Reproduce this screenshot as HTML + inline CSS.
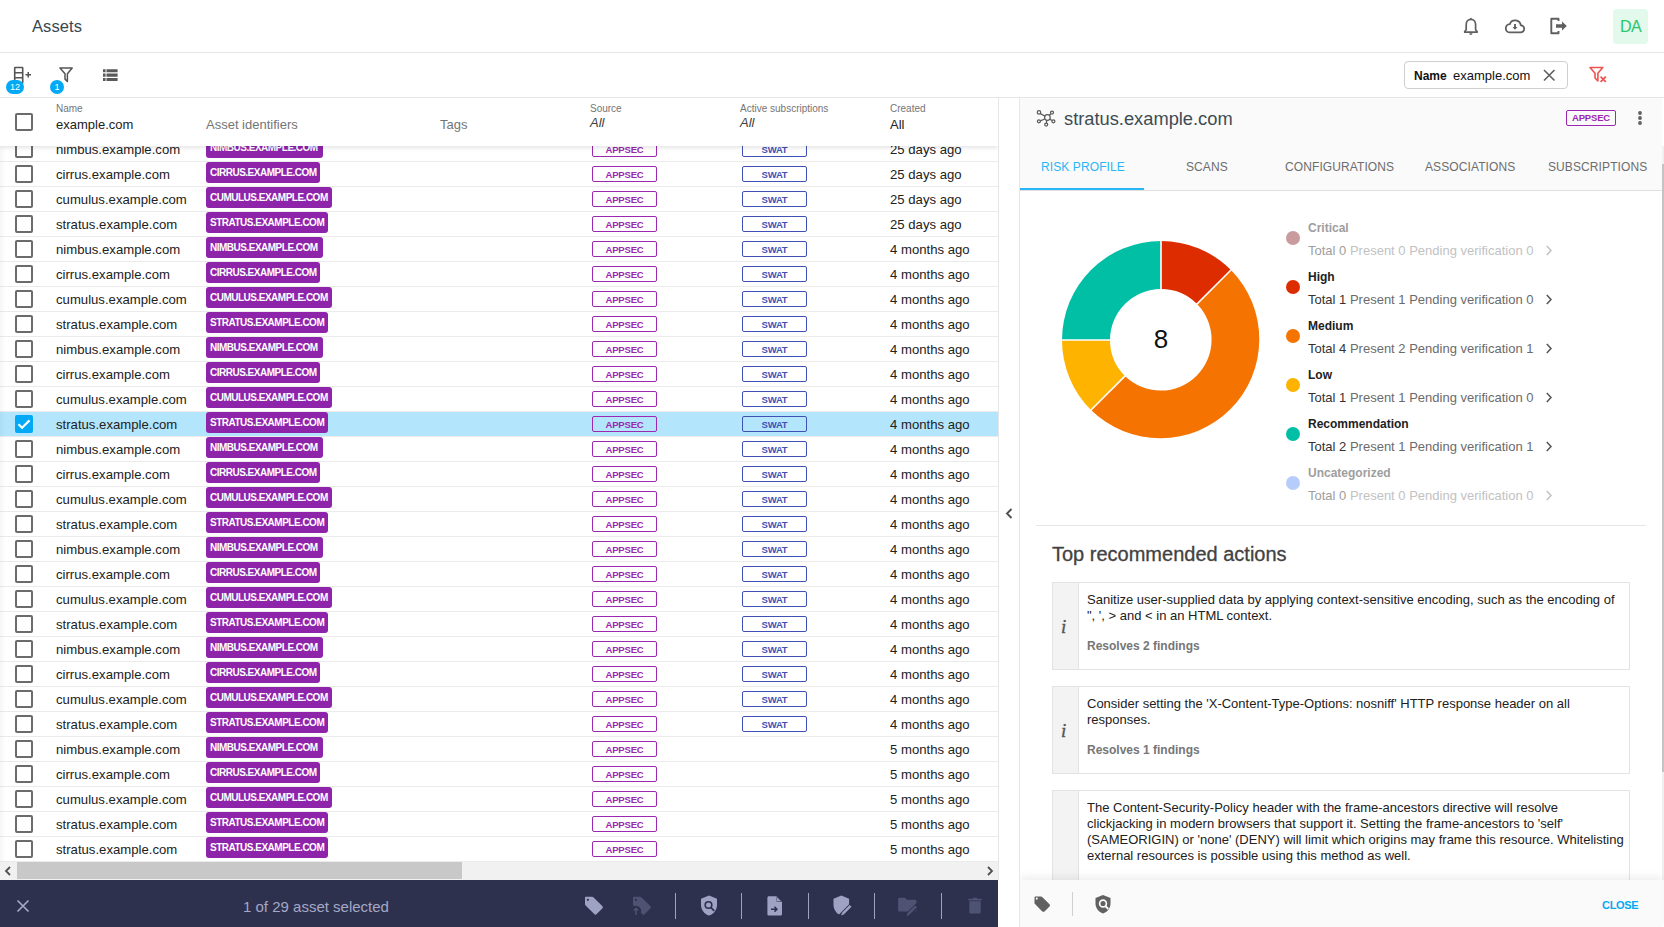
<!DOCTYPE html>
<html><head><meta charset="utf-8">
<style>
*{box-sizing:border-box;margin:0;padding:0}
html,body{width:1664px;height:927px;overflow:hidden;background:#fff;font-family:"Liberation Sans",sans-serif;color:#212121}
.abs{position:absolute}
#top{position:absolute;left:0;top:0;width:1664px;height:53px;border-bottom:1px solid #e6e6e6;background:#fff}
#top .title{position:absolute;left:32px;top:17px;font-size:16.5px;color:#37474f;letter-spacing:0.1px}
#tb{position:absolute;left:0;top:53px;width:1664px;height:45px;border-bottom:1px solid #e6e6e6;background:#fff}
.badge{position:absolute;background:#03a9f4;color:#fff;font-size:9px;text-align:center;line-height:15px;height:14px;border-radius:7px}
/* table */
#tbl{position:absolute;left:0;top:98px;width:999px;height:782px;overflow:hidden;border-right:1px solid #e6e6e6}
#thead{position:absolute;left:0;top:0;width:998px;height:48px;background:#fff;z-index:5;box-shadow:0 2px 4px rgba(0,0,0,0.10)}
.hl{position:absolute;font-size:10px;color:#757575;top:5px}
.hv{position:absolute;font-size:13px;top:19px;color:#212121}
.row{position:absolute;left:0;width:998px;height:25px;border-bottom:1px solid #ebebeb;background:#fff}
.row.sel{background:#b3e5fc}
.cb{position:absolute;left:15px;top:3px;width:18px;height:18px;border:2px solid #6b6b6b;border-radius:2px}
.cb.on{background:#03a9f4;border-color:#03a9f4}
.cb.on svg{position:absolute;left:-2px;top:-2px}
.nm{position:absolute;left:56px;top:5px;font-size:13.15px;color:#212121}
.chip{position:absolute;left:206px;top:0px;height:21px;background:#8e24aa;color:#fff;border-radius:3px;font-size:10px;font-weight:bold;letter-spacing:-0.5px;line-height:22px;padding-left:4px;white-space:nowrap;overflow:hidden}
.src{position:absolute;left:592px;top:4px;width:65px;height:16px;border:1.5px solid #9c27b0;border-radius:2px;color:#9c27b0;font-size:9.5px;font-weight:bold;letter-spacing:-0.2px;text-align:center;line-height:15px}
.swat{position:absolute;left:742px;top:4px;width:65px;height:16px;border:1.5px solid #3f51b5;border-radius:2px;color:#3f51b5;font-size:9.5px;font-weight:bold;letter-spacing:-0.2px;text-align:center;line-height:15px}
.cr{position:absolute;left:890px;top:5px;font-size:13.15px;color:#212121}
#hscroll{position:absolute;left:0;top:764px;width:998px;height:18px;background:#f1f1f1}
#bar{position:absolute;left:0;top:880px;width:998px;height:47px;background:#2e314d}
/* divider */
#div{position:absolute;left:999px;top:98px;width:21px;height:829px;background:#fff;border-right:1px solid #e6e6e6}
/* panel */
#panel{position:absolute;left:1020px;top:98px;width:644px;height:829px;background:#fff;overflow:hidden}
#phead{position:absolute;left:0;top:0;width:642px;height:93px;background:#fafafa;border-bottom:1px solid #e0e0e0}
.tab{position:absolute;top:62px;font-size:12px;color:#6d6d6d;letter-spacing:0.1px}
.leg{position:absolute;left:288px}
.dot{position:absolute;left:-15px;width:14px;height:14px;border-radius:7px}
.lt{position:absolute;left:0;font-size:12px;font-weight:bold;color:#212121;white-space:nowrap}
.ld{position:absolute;left:0;font-size:13px;color:#6b6b6b;white-space:nowrap}
.ld b{font-weight:normal;color:#333}
.card{position:absolute;left:32px;width:578px;border:1px solid #e3e3e3;background:#fff}
.card .ic{position:absolute;left:0;top:0;bottom:0;width:26px;background:#f3f3f3;border-right:1px solid #e3e3e3}
.card .ic span{position:absolute;left:8px;top:50%;margin-top:-10px;font-family:"Liberation Serif",serif;font-style:italic;font-size:19px;color:#555;-webkit-text-stroke:0.4px #555}
.card .tx{position:absolute;left:34px;top:8.5px;width:540px;font-size:13px;line-height:16px;color:#212121}
.card .rs{position:absolute;left:34px;font-size:12px;font-weight:bold;color:#767676}
#pfoot{position:absolute;left:0;top:782px;width:642px;height:47px;background:#fafafa;box-shadow:0 -3px 8px rgba(0,0,0,0.07)}
#vscroll{position:absolute;left:642px;top:48px;width:2px;height:734px;background:#f0f0f0}
</style></head><body>
<div id="top">
  <div class="title">Assets</div>
  <!-- bell -->
  <svg class="abs" style="left:1461px;top:15px" width="20" height="22" viewBox="0 0 20 22"><path d="M9.9 4.4c-2.9 0-4.7 2.3-4.7 5.2v5.1l-1.5 1.8v.7h12.4v-.7l-1.5-1.8V9.6c0-2.9-1.8-5.2-4.7-5.2z" fill="none" stroke="#5f5f5f" stroke-width="1.7" stroke-linejoin="round"/><rect x="9.1" y="2.8" width="1.6" height="2.2" rx=".8" fill="#5f5f5f"/><path d="M8.3 18.3h3.2a1.6 1.6 0 0 1-3.2 0z" fill="#5f5f5f"/></svg>
  <!-- cloud download -->
  <svg class="abs" style="left:1503px;top:17px" width="24" height="18" viewBox="0 0 24 18"><g transform="translate(1.2 0.6) scale(0.9)"><path d="M6.5 16.5h11.5a4 4 0 0 0 .4-8 6.3 6.3 0 0 0-12.2-1.2A4.6 4.6 0 0 0 6.5 16.5z" fill="none" stroke="#5f5f5f" stroke-width="2" stroke-linejoin="round"/><path d="M12 7.2v4.2" stroke="#5f5f5f" stroke-width="2.1"/><path d="M9.2 10.4h5.6L12 13.5z" fill="#5f5f5f"/></g></svg>
  <!-- logout -->
  <svg class="abs" style="left:1549px;top:16px" width="20" height="20" viewBox="0 0 20 20"><path d="M9.5 5V2.8H2.3v14.4h7.2V15" fill="none" stroke="#5f5f5f" stroke-width="1.9" stroke-linejoin="round"/><path d="M7 8.3h6V5.5l4.8 4.5-4.8 4.5v-2.8H7z" fill="#5f5f5f"/></svg>
  <div class="abs" style="left:1613px;top:9px;width:35px;height:35px;background:#e2f9ec;border-radius:4px;color:#29c66a;font-size:16px;text-align:center;line-height:35px;letter-spacing:-0.5px">DA</div>
</div>
<div id="tb">
  <!-- column add -->
  <svg class="abs" style="left:12px;top:13px" width="22" height="18" viewBox="0 0 22 18"><rect x="2.7" y="1.5" width="8" height="15.5" fill="none" stroke="#555" stroke-width="1.6" rx="0.6"/><path d="M2.7 6.7h8M2.7 11.8h8" stroke="#555" stroke-width="1.6"/><path d="M13.5 8.8h5.5M16.25 6v5.5" stroke="#555" stroke-width="1.5"/></svg>
  <div class="badge" style="left:6px;top:27px;width:18px">12</div>
  <!-- filter -->
  <svg class="abs" style="left:58px;top:13px" width="16" height="17" viewBox="0 0 16 17"><path d="M2 1.9h12.2L9.4 7.7v7.8l-2.4-2.4V7.7z" fill="none" stroke="#555" stroke-width="1.5" stroke-linejoin="round"/></svg>
  <div class="badge" style="left:50px;top:27px;width:14px">1</div>
  <!-- list -->
  <svg class="abs" style="left:103px;top:16px" width="15" height="13" viewBox="0 0 15 13"><path d="M0 .2h2.6v3.1H0zM3.5 .2H14.6v3.1H3.5zM0 4.6h2.6v3.1H0zM3.5 4.6H14.6v3.1H3.5zM0 9h2.6v3.1H0zM3.5 9H14.6v3.1H3.5z" fill="#595959"/></svg>
  <!-- filter chip -->
  <div class="abs" style="left:1404px;top:8px;width:164px;height:28px;border:1px solid #cfcfcf;border-radius:4px;background:#fff">
    <span class="abs" style="left:9px;top:7px;font-size:12px;font-weight:bold;color:#111">Name</span>
    <span class="abs" style="left:48px;top:6px;font-size:13px;color:#111">example.com</span>
    <svg class="abs" style="left:137px;top:6px" width="14" height="14" viewBox="0 0 14 14"><path d="M2 2l10.5 10.5M12.5 2L2 12.5" stroke="#5f5f5f" stroke-width="1.6"/></svg>
  </div>
  <svg class="abs" style="left:1588px;top:13px" width="20" height="17" viewBox="0 0 20 17"><path d="M2 1.5h12.8L9.9 7.3v7.6L7 12V7.3z" fill="none" stroke="#ef5350" stroke-width="1.6" stroke-linejoin="round"/><path d="M12.6 10.6l5.2 5.2M17.8 10.6l-5.2 5.2" stroke="#ef5350" stroke-width="1.7"/></svg>
</div>

<div id="tbl">
<div class="row" style="top:39px"><div class="cb"></div><div class="nm">nimbus.example.com</div><div class="chip" style="width:117px">NIMBUS.EXAMPLE.COM</div><div class="src">APPSEC</div><div class="swat">SWAT</div><div class="cr">25 days ago</div></div>
<div class="row" style="top:64px"><div class="cb"></div><div class="nm">cirrus.example.com</div><div class="chip" style="width:114px">CIRRUS.EXAMPLE.COM</div><div class="src">APPSEC</div><div class="swat">SWAT</div><div class="cr">25 days ago</div></div>
<div class="row" style="top:89px"><div class="cb"></div><div class="nm">cumulus.example.com</div><div class="chip" style="width:126px">CUMULUS.EXAMPLE.COM</div><div class="src">APPSEC</div><div class="swat">SWAT</div><div class="cr">25 days ago</div></div>
<div class="row" style="top:114px"><div class="cb"></div><div class="nm">stratus.example.com</div><div class="chip" style="width:122px">STRATUS.EXAMPLE.COM</div><div class="src">APPSEC</div><div class="swat">SWAT</div><div class="cr">25 days ago</div></div>
<div class="row" style="top:139px"><div class="cb"></div><div class="nm">nimbus.example.com</div><div class="chip" style="width:117px">NIMBUS.EXAMPLE.COM</div><div class="src">APPSEC</div><div class="swat">SWAT</div><div class="cr">4 months ago</div></div>
<div class="row" style="top:164px"><div class="cb"></div><div class="nm">cirrus.example.com</div><div class="chip" style="width:114px">CIRRUS.EXAMPLE.COM</div><div class="src">APPSEC</div><div class="swat">SWAT</div><div class="cr">4 months ago</div></div>
<div class="row" style="top:189px"><div class="cb"></div><div class="nm">cumulus.example.com</div><div class="chip" style="width:126px">CUMULUS.EXAMPLE.COM</div><div class="src">APPSEC</div><div class="swat">SWAT</div><div class="cr">4 months ago</div></div>
<div class="row" style="top:214px"><div class="cb"></div><div class="nm">stratus.example.com</div><div class="chip" style="width:122px">STRATUS.EXAMPLE.COM</div><div class="src">APPSEC</div><div class="swat">SWAT</div><div class="cr">4 months ago</div></div>
<div class="row" style="top:239px"><div class="cb"></div><div class="nm">nimbus.example.com</div><div class="chip" style="width:117px">NIMBUS.EXAMPLE.COM</div><div class="src">APPSEC</div><div class="swat">SWAT</div><div class="cr">4 months ago</div></div>
<div class="row" style="top:264px"><div class="cb"></div><div class="nm">cirrus.example.com</div><div class="chip" style="width:114px">CIRRUS.EXAMPLE.COM</div><div class="src">APPSEC</div><div class="swat">SWAT</div><div class="cr">4 months ago</div></div>
<div class="row" style="top:289px"><div class="cb"></div><div class="nm">cumulus.example.com</div><div class="chip" style="width:126px">CUMULUS.EXAMPLE.COM</div><div class="src">APPSEC</div><div class="swat">SWAT</div><div class="cr">4 months ago</div></div>
<div class="row sel" style="top:314px"><div class="cb on"><svg width="18" height="18" viewBox="0 0 18 18"><path d="M3.5 9.2l3.6 3.6 7.4-7.4" fill="none" stroke="#fff" stroke-width="2.2"/></svg></div><div class="nm">stratus.example.com</div><div class="chip" style="width:122px">STRATUS.EXAMPLE.COM</div><div class="src">APPSEC</div><div class="swat">SWAT</div><div class="cr">4 months ago</div></div>
<div class="row" style="top:339px"><div class="cb"></div><div class="nm">nimbus.example.com</div><div class="chip" style="width:117px">NIMBUS.EXAMPLE.COM</div><div class="src">APPSEC</div><div class="swat">SWAT</div><div class="cr">4 months ago</div></div>
<div class="row" style="top:364px"><div class="cb"></div><div class="nm">cirrus.example.com</div><div class="chip" style="width:114px">CIRRUS.EXAMPLE.COM</div><div class="src">APPSEC</div><div class="swat">SWAT</div><div class="cr">4 months ago</div></div>
<div class="row" style="top:389px"><div class="cb"></div><div class="nm">cumulus.example.com</div><div class="chip" style="width:126px">CUMULUS.EXAMPLE.COM</div><div class="src">APPSEC</div><div class="swat">SWAT</div><div class="cr">4 months ago</div></div>
<div class="row" style="top:414px"><div class="cb"></div><div class="nm">stratus.example.com</div><div class="chip" style="width:122px">STRATUS.EXAMPLE.COM</div><div class="src">APPSEC</div><div class="swat">SWAT</div><div class="cr">4 months ago</div></div>
<div class="row" style="top:439px"><div class="cb"></div><div class="nm">nimbus.example.com</div><div class="chip" style="width:117px">NIMBUS.EXAMPLE.COM</div><div class="src">APPSEC</div><div class="swat">SWAT</div><div class="cr">4 months ago</div></div>
<div class="row" style="top:464px"><div class="cb"></div><div class="nm">cirrus.example.com</div><div class="chip" style="width:114px">CIRRUS.EXAMPLE.COM</div><div class="src">APPSEC</div><div class="swat">SWAT</div><div class="cr">4 months ago</div></div>
<div class="row" style="top:489px"><div class="cb"></div><div class="nm">cumulus.example.com</div><div class="chip" style="width:126px">CUMULUS.EXAMPLE.COM</div><div class="src">APPSEC</div><div class="swat">SWAT</div><div class="cr">4 months ago</div></div>
<div class="row" style="top:514px"><div class="cb"></div><div class="nm">stratus.example.com</div><div class="chip" style="width:122px">STRATUS.EXAMPLE.COM</div><div class="src">APPSEC</div><div class="swat">SWAT</div><div class="cr">4 months ago</div></div>
<div class="row" style="top:539px"><div class="cb"></div><div class="nm">nimbus.example.com</div><div class="chip" style="width:117px">NIMBUS.EXAMPLE.COM</div><div class="src">APPSEC</div><div class="swat">SWAT</div><div class="cr">4 months ago</div></div>
<div class="row" style="top:564px"><div class="cb"></div><div class="nm">cirrus.example.com</div><div class="chip" style="width:114px">CIRRUS.EXAMPLE.COM</div><div class="src">APPSEC</div><div class="swat">SWAT</div><div class="cr">4 months ago</div></div>
<div class="row" style="top:589px"><div class="cb"></div><div class="nm">cumulus.example.com</div><div class="chip" style="width:126px">CUMULUS.EXAMPLE.COM</div><div class="src">APPSEC</div><div class="swat">SWAT</div><div class="cr">4 months ago</div></div>
<div class="row" style="top:614px"><div class="cb"></div><div class="nm">stratus.example.com</div><div class="chip" style="width:122px">STRATUS.EXAMPLE.COM</div><div class="src">APPSEC</div><div class="swat">SWAT</div><div class="cr">4 months ago</div></div>
<div class="row" style="top:639px"><div class="cb"></div><div class="nm">nimbus.example.com</div><div class="chip" style="width:117px">NIMBUS.EXAMPLE.COM</div><div class="src">APPSEC</div><div class="cr">5 months ago</div></div>
<div class="row" style="top:664px"><div class="cb"></div><div class="nm">cirrus.example.com</div><div class="chip" style="width:114px">CIRRUS.EXAMPLE.COM</div><div class="src">APPSEC</div><div class="cr">5 months ago</div></div>
<div class="row" style="top:689px"><div class="cb"></div><div class="nm">cumulus.example.com</div><div class="chip" style="width:126px">CUMULUS.EXAMPLE.COM</div><div class="src">APPSEC</div><div class="cr">5 months ago</div></div>
<div class="row" style="top:714px"><div class="cb"></div><div class="nm">stratus.example.com</div><div class="chip" style="width:122px">STRATUS.EXAMPLE.COM</div><div class="src">APPSEC</div><div class="cr">5 months ago</div></div>
<div class="row" style="top:739px"><div class="cb"></div><div class="nm">stratus.example.com</div><div class="chip" style="width:122px">STRATUS.EXAMPLE.COM</div><div class="src">APPSEC</div><div class="cr">5 months ago</div></div>
  <div class="abs" style="left:0;top:48px;width:6px;height:716px;background:linear-gradient(to right,rgba(0,0,0,0.035),rgba(0,0,0,0));z-index:4"></div>
  <div id="thead">
    <div class="cb" style="top:15px"></div>
    <div class="hl" style="left:56px">Name</div>
    <div class="hv" style="left:56px">example.com</div>
    <div class="hv" style="left:206px;color:#757575">Asset identifiers</div>
    <div class="hv" style="left:440px;color:#757575">Tags</div>
    <div class="hl" style="left:590px">Source</div>
    <div class="hv" style="left:590px;top:17px;font-style:italic;color:#424242">All</div>
    <div class="hl" style="left:740px">Active subscriptions</div>
    <div class="hv" style="left:740px;top:17px;font-style:italic;color:#424242">All</div>
    <div class="hl" style="left:890px">Created</div>
    <div class="hv" style="left:890px">All</div>
  </div>
  <div id="hscroll">
    <div class="abs" style="left:17px;top:0px;width:445px;height:17px;background:#c8c8c8"></div>
    <svg class="abs" style="left:4px;top:4px" width="8" height="10" viewBox="0 0 8 10"><path d="M6 1L2 5l4 4" fill="none" stroke="#505050" stroke-width="1.8"/></svg>
    <svg class="abs" style="left:986px;top:4px" width="8" height="10" viewBox="0 0 8 10"><path d="M2 1l4 4-4 4" fill="none" stroke="#505050" stroke-width="1.8"/></svg>
  </div>
</div>
<div id="bar">
  <svg class="abs" style="left:16px;top:19px" width="14" height="14" viewBox="0 0 14 14"><path d="M1.5 1.5l11 11M12.5 1.5l-11 11" stroke="#a4a8c6" stroke-width="1.7"/></svg>
  <div class="abs" style="left:243px;top:18px;font-size:15px;color:#a4a8c6">1 of 29 asset selected</div>
  <!-- tag -->
  <svg class="abs" style="left:584px;top:16px" width="20" height="20" viewBox="0 0 20 20"><path d="M1 1.8v6.3c0 .5.2 1 .6 1.4l8.6 8.6c.7.7 1.8.7 2.5 0l5.6-5.6c.7-.7.7-1.8 0-2.5L9.6 1.4C9.2 1 8.7.8 8.1.8H2c-.6 0-1 .4-1 1z" fill="#9ea2c3"/><circle cx="3.9" cy="3.8" r="1.1" fill="#2e314d"/></svg>
  <!-- tag upload disabled -->
  <svg class="abs" style="left:632px;top:16px" width="20" height="20" viewBox="0 0 20 20"><path d="M1 1.8v6.3c0 .5.2 1 .6 1.4l8.6 8.6c.7.7 1.8.7 2.5 0l5.6-5.6c.7-.7.7-1.8 0-2.5L9.6 1.4C9.2 1 8.7.8 8.1.8H2c-.6 0-1 .4-1 1z" fill="#4f5373"/><circle cx="3.9" cy="3.8" r="1.1" fill="#2e314d"/><circle cx="4" cy="15" r="5.2" fill="#2e314d"/><path d="M4 19v-6.5M1.8 14.6L4 12.4l2.2 2.2" fill="none" stroke="#4f5373" stroke-width="1.4"/></svg>
  <div class="abs" style="left:675px;top:13px;width:1px;height:26px;background:#9ea2c3"></div>
  <!-- shield search -->
  <svg class="abs" style="left:700px;top:15px" width="18" height="21" viewBox="0 0 18 21"><path d="M9 .5L1 3.7v6c0 5 3.4 9.6 8 10.8 4.6-1.2 8-5.8 8-10.8v-6z" fill="#9ea2c3"/><circle cx="8.5" cy="10" r="3.3" fill="none" stroke="#2e314d" stroke-width="1.6"/><path d="M10.8 12.4l3.4 3.4" stroke="#2e314d" stroke-width="1.8"/></svg>
  <div class="abs" style="left:741px;top:13px;width:1px;height:26px;background:#9ea2c3"></div>
  <!-- file arrow -->
  <svg class="abs" style="left:767px;top:16px" width="16" height="20" viewBox="0 0 16 20"><path d="M2 .3h7.6L15 5.7V18c0 .9-.7 1.6-1.6 1.6H2c-.9 0-1.6-.7-1.6-1.6V1.9C.4 1 1.1.3 2 .3z" fill="#9ea2c3"/><path d="M9.6.3v5.4H15" fill="#2e314d"/><path d="M10 1.3L14 5.3H10z" fill="#9ea2c3"/><path d="M4 13.2h5.5M7.5 10.8l2.4 2.4-2.4 2.4" fill="none" stroke="#2e314d" stroke-width="1.5"/></svg>
  <div class="abs" style="left:808px;top:13px;width:1px;height:26px;background:#9ea2c3"></div>
  <!-- shield edit -->
  <svg class="abs" style="left:833px;top:15px" width="19" height="21" viewBox="0 0 19 21"><path d="M8.3 .5L.5 3.7v6c0 5 3.4 9.6 7.8 10.8 4.4-1.2 7.8-5.8 7.8-10.8v-6z" fill="#9ea2c3"/><path d="M6.5 22.5L20 9" stroke="#2e314d" stroke-width="5.2"/><path d="M9.8 18.6L17.6 10.8" stroke="#9ea2c3" stroke-width="2.6"/><path d="M8.2 20.3l.6-2.6 2 2z" fill="#9ea2c3"/></svg>
  <div class="abs" style="left:874px;top:13px;width:1px;height:26px;background:#9ea2c3"></div>
  <!-- folder edit disabled -->
  <svg class="abs" style="left:898px;top:17px" width="20" height="19" viewBox="0 0 20 19"><path d="M1.5 .8h5.6l2 2h8c.8 0 1.4.6 1.4 1.4v9c0 .8-.6 1.4-1.4 1.4H1.5C.7 14.6.1 14 .1 13.2V2.2C.1 1.4.7.8 1.5.8z" fill="#4f5373"/><path d="M7 21L20.5 7.5" stroke="#2e314d" stroke-width="5"/><path d="M10.2 17.2L18 9.4" stroke="#4f5373" stroke-width="2.6"/><path d="M8.6 18.9l.6-2.6 2 2z" fill="#4f5373"/></svg>
  <div class="abs" style="left:941px;top:13px;width:1px;height:26px;background:#9ea2c3"></div>
  <!-- trash disabled -->
  <svg class="abs" style="left:968px;top:17px" width="14" height="17" viewBox="0 0 14 17"><path d="M.3 1.8h4.2l.8-1h3.4l.8 1h4.2v1.6H.3z" fill="#4f5373"/><path d="M1.3 4.3h11.4V15c0 .9-.7 1.6-1.6 1.6H2.9c-.9 0-1.6-.7-1.6-1.6z" fill="#4f5373"/></svg>
</div>

<div id="div">
  <svg class="abs" style="left:6px;top:410px" width="8" height="11" viewBox="0 0 8 11"><path d="M6.5 1L2 5.5 6.5 10" fill="none" stroke="#505050" stroke-width="1.9"/></svg>
</div>

<div id="panel">
  <div id="phead">
    <svg class="abs" style="left:15px;top:11px" width="22" height="20" viewBox="0 0 22 20"><g fill="none" stroke="#5a5a5a" stroke-width="1.25"><circle cx="12.4" cy="8.5" r="2.8"/><circle cx="4" cy="3.4" r="1.7"/><circle cx="17" cy="3.6" r="1.5"/><circle cx="3.9" cy="12.3" r="1.5"/><circle cx="18.4" cy="12.3" r="1.5"/><circle cx="11.2" cy="15.6" r="1.5"/><path d="M5.4 4.6l4.7 2.6M15.8 4.7l-1.6 1.7M5.3 11.8l4.5-1.8M17 11.6l-2-1.4M11.7 11.2l-.3 2.9"/></g></svg>
    <div class="abs" style="left:44px;top:10px;font-size:18.3px;color:#3d4b53">stratus.example.com</div>
    <div class="abs" style="left:546px;top:12px;width:50px;height:16px;border:1.5px solid #9c27b0;border-radius:2px;color:#9c27b0;font-size:9.5px;font-weight:bold;letter-spacing:-0.2px;text-align:center;line-height:14px">APPSEC</div>
    <svg class="abs" style="left:617px;top:12px" width="6" height="18" viewBox="0 0 6 18"><circle cx="3" cy="3" r="1.9" fill="#5f5f5f"/><circle cx="3" cy="8" r="1.9" fill="#5f5f5f"/><circle cx="3" cy="13" r="1.9" fill="#5f5f5f"/></svg>
    <div class="tab" style="left:21px;color:#29b6f6">RISK PROFILE</div>
    <div class="tab" style="left:166px">SCANS</div>
    <div class="tab" style="left:265px">CONFIGURATIONS</div>
    <div class="tab" style="left:405px">ASSOCIATIONS</div>
    <div class="tab" style="left:528px">SUBSCRIPTIONS</div>
    <div class="abs" style="left:0;top:90px;width:124px;height:2px;background:#29b6f6"></div>
  </div>
  <svg class="abs" style="left:31px;top:132px" width="220" height="220" viewBox="0 0 220 220"><path d="M110.00 11.00A99 99 0 0 1 180.00 40.00L146.06 73.94A51 51 0 0 0 110.00 59.00Z" fill="#dd2c00"/><path d="M180.00 40.00A99 99 0 0 1 40.00 180.00L73.94 146.06A51 51 0 0 0 146.06 73.94Z" fill="#f57300"/><path d="M40.00 180.00A99 99 0 0 1 11.00 110.00L59.00 110.00A51 51 0 0 0 73.94 146.06Z" fill="#fdb300"/><path d="M11.00 110.00A99 99 0 0 1 110.00 11.00L110.00 59.00A51 51 0 0 0 59.00 110.00Z" fill="#00bfa5"/><line x1="110.00" y1="60.00" x2="110.00" y2="10.00" stroke="#fff" stroke-width="1.6"/><line x1="145.36" y1="74.64" x2="180.71" y2="39.29" stroke="#fff" stroke-width="1.6"/><line x1="74.64" y1="145.36" x2="39.29" y2="180.71" stroke="#fff" stroke-width="1.6"/><line x1="60.00" y1="110.00" x2="10.00" y2="110.00" stroke="#fff" stroke-width="1.6"/></svg><div class="abs" style="left:121px;top:226px;width:40px;text-align:center;font-size:26px;color:#111">8</div><div class="dot" style="left:266px;top:133px;background:#c99b9d"></div><div class="lt" style="left:288px;top:123px;color:#9e9e9e">Critical</div><div class="ld" style="left:288px;top:145px;color:#c2c2c2"><b style="color:#9e9e9e">Total 0</b> Present 0 Pending verification 0</div><svg class="abs" style="left:525px;top:147px" width="8" height="11" viewBox="0 0 8 11"><path d="M1.8 1l4.2 4.5-4.2 4.5" fill="none" stroke="#c2c2c2" stroke-width="1.5"/></svg><div class="dot" style="left:266px;top:182px;background:#dd2c00"></div><div class="lt" style="left:288px;top:172px;color:#212121">High</div><div class="ld" style="left:288px;top:194px;color:#6b6b6b"><b style="color:#333">Total 1</b> Present 1 Pending verification 0</div><svg class="abs" style="left:525px;top:196px" width="8" height="11" viewBox="0 0 8 11"><path d="M1.8 1l4.2 4.5-4.2 4.5" fill="none" stroke="#555" stroke-width="1.5"/></svg><div class="dot" style="left:266px;top:231px;background:#f57300"></div><div class="lt" style="left:288px;top:221px;color:#212121">Medium</div><div class="ld" style="left:288px;top:243px;color:#6b6b6b"><b style="color:#333">Total 4</b> Present 2 Pending verification 1</div><svg class="abs" style="left:525px;top:245px" width="8" height="11" viewBox="0 0 8 11"><path d="M1.8 1l4.2 4.5-4.2 4.5" fill="none" stroke="#555" stroke-width="1.5"/></svg><div class="dot" style="left:266px;top:280px;background:#fdb300"></div><div class="lt" style="left:288px;top:270px;color:#212121">Low</div><div class="ld" style="left:288px;top:292px;color:#6b6b6b"><b style="color:#333">Total 1</b> Present 1 Pending verification 0</div><svg class="abs" style="left:525px;top:294px" width="8" height="11" viewBox="0 0 8 11"><path d="M1.8 1l4.2 4.5-4.2 4.5" fill="none" stroke="#555" stroke-width="1.5"/></svg><div class="dot" style="left:266px;top:329px;background:#00bfa5"></div><div class="lt" style="left:288px;top:319px;color:#212121">Recommendation</div><div class="ld" style="left:288px;top:341px;color:#6b6b6b"><b style="color:#333">Total 2</b> Present 1 Pending verification 1</div><svg class="abs" style="left:525px;top:343px" width="8" height="11" viewBox="0 0 8 11"><path d="M1.8 1l4.2 4.5-4.2 4.5" fill="none" stroke="#555" stroke-width="1.5"/></svg><div class="dot" style="left:266px;top:378px;background:#b6cdfb"></div><div class="lt" style="left:288px;top:368px;color:#9e9e9e">Uncategorized</div><div class="ld" style="left:288px;top:390px;color:#c2c2c2"><b style="color:#9e9e9e">Total 0</b> Present 0 Pending verification 0</div><svg class="abs" style="left:525px;top:392px" width="8" height="11" viewBox="0 0 8 11"><path d="M1.8 1l4.2 4.5-4.2 4.5" fill="none" stroke="#c2c2c2" stroke-width="1.5"/></svg><div class="abs" style="left:16px;top:427px;width:610px;height:1px;background:#e6e6e6"></div><div class="abs" style="left:32px;top:445px;font-size:20px;color:#424242;-webkit-text-stroke:0.3px #424242">Top recommended actions</div><div class="card" style="top:484px;height:88px"><div class="ic"><span>i</span></div><div class="tx">Sanitize user-supplied data by applying context-sensitive encoding, such as the encoding of<br>", ', &gt; and &lt; in an HTML context.</div><div class="rs" style="top:56px">Resolves 2 findings</div></div><div class="card" style="top:588px;height:88px"><div class="ic"><span>i</span></div><div class="tx">Consider setting the 'X-Content-Type-Options: nosniff' HTTP response header on all<br>responses.</div><div class="rs" style="top:56px">Resolves 1 findings</div></div><div class="card" style="top:692px;height:240px"><div class="ic"><span>i</span></div><div class="tx">The Content-Security-Policy header with the frame-ancestors directive will resolve<br>clickjacking in modern browsers that support it. Setting the frame-ancestors to 'self'<br>(SAMEORIGIN) or 'none' (DENY) will limit which origins may frame this resource. Whitelisting<br>external resources is possible using this method as well.</div><div class="rs" style="top:104px">Resolves 1 findings</div></div>
  <div id="vscroll"><div class="abs" style="left:0;top:18px;width:2px;height:608px;background:#c4c4c4"></div></div>
  <div id="pfoot">
    <svg class="abs" style="left:13px;top:15px" width="18" height="18" viewBox="0 0 18 18"><path d="M1.5 2.6v5.3c0 .5.2.9.5 1.2l7.3 7.3c.6.6 1.6.6 2.2 0l5-5c.6-.6.6-1.6 0-2.2L9.2 1.9c-.3-.3-.7-.5-1.2-.5H2.7c-.7 0-1.2.5-1.2 1.2z" fill="#616161"/><circle cx="3.8" cy="3.6" r="1.1" fill="#fafafa"/></svg>
    <div class="abs" style="left:52px;top:12px;width:1px;height:24px;background:#cfcfcf"></div>
    <svg class="abs" style="left:74px;top:14px" width="18" height="20" viewBox="0 0 18 20"><path d="M9 1L1.5 4v5.5c0 4.6 3.2 8.8 7.5 9.9 4.3-1.1 7.5-5.3 7.5-9.9V4z" fill="#616161"/><circle cx="9" cy="9.5" r="3.4" fill="none" stroke="#fafafa" stroke-width="1.7"/><path d="M11.3 12l3 3" stroke="#fafafa" stroke-width="1.8"/></svg>
    <div class="abs" style="left:582px;top:19px;font-size:11px;font-weight:bold;letter-spacing:-0.3px;color:#03a9f4">CLOSE</div>
  </div>
</div>
</body></html>
